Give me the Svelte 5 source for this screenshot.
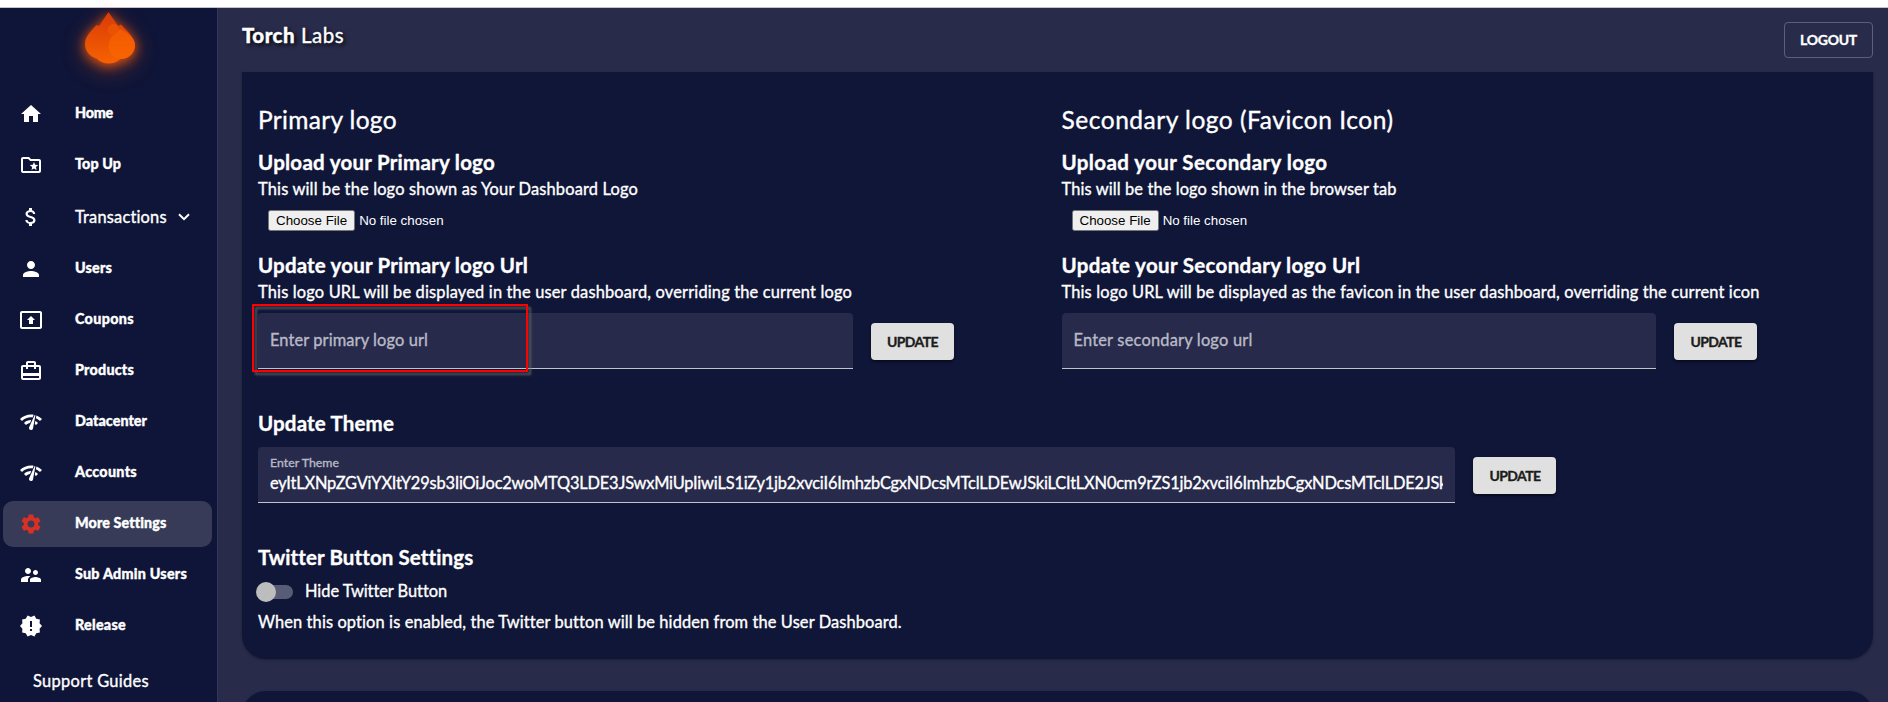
<script>
  const gauge = 'M15.900 5c-.17 0-.32.090-.41.230l-.07.150-5.180 11.650c-.16.290-.26.610-.26.960 0 1.110.9 2.010 2.010 2.010.96 0 1.770-.68 1.960-1.590l.01-.03L16.400 5.500c0-.28-.22-.5-.5-.5zM1 9l2 2c2.880-2.880 6.790-4.080 10.530-3.620l1.190-2.680C9.890 3.840 4.740 5.270 1 9zm20 2l2-2c-1.640-1.640-3.550-2.820-5.590-3.570l-.53 2.820c1.500.62 2.900 1.530 4.120 2.750zm-4 4l2-2c-.8-.8-1.700-1.420-2.660-1.890l-.55 2.920c.42.270.83.590 1.210.970zM5 13l2 2c1.130-1.130 2.560-1.790 4.030-2l1.280-2.880c-2.630-.08-5.300.87-7.310 2.880z';

  const nav = [
    { label: 'Home', width: 38, icon: 'M10 20v-6h4v6h5v-8h3L12 3 2 12h3v8z' },
    { label: 'Top Up', width: 46, icon: 'M20 6h-8l-2-2H4c-1.100 0-1.990.9-1.990 2L2 18c0 1.100.9 2 2 2h16c1.100 0 2-.9 2-2V8c0-1.100-.9-2-2-2zm0 12H4V6h5.170l2 2H20v10zm-6.920-3.040L12.390 17 15 15.470 17.610 17l-.69-2.960 2.300-1.990-3.030-.26L15 9l-1.190 2.790-3.030.26 2.300 1.990z' },
    { label: 'Transactions', width: 92, group: true, icon: 'M11.800 10.900c-2.270-.59-3-1.200-3-2.150 0-1.090 1.010-1.850 2.700-1.850 1.780 0 2.440.85 2.500 2.100h2.210c-.07-1.720-1.120-3.300-3.210-3.810V3h-3v2.160c-1.940.42-3.500 1.680-3.500 3.610 0 2.310 1.910 3.460 4.700 4.130 2.500.6 3 1.480 3 2.410 0 .69-.49 1.790-2.700 1.790-2.060 0-2.870-.92-2.980-2.100h-2.200c.12 2.190 1.760 3.420 3.680 3.830V21h3v-2.150c1.950-.37 3.500-1.500 3.500-3.550 0-2.840-2.430-3.810-4.700-4.400z' },
    { label: 'Users', width: 37, icon: 'M12 12c2.210 0 4-1.790 4-4s-1.790-4-4-4-4 1.790-4 4 1.790 4 4 4zm0 2c-2.670 0-8 1.340-8 4v2h16v-2c0-2.660-5.330-4-8-4z' },
    { label: 'Coupons', width: 59, icon: 'M21 3H3c-1.110 0-2 .89-2 2v14c0 1.110.89 2 2 2h18c1.110 0 2-.89 2-2V5c0-1.110-.89-2-2-2zm0 16.020H3V4.980h18v14.040zM10 12H8l4-4 4 4h-2v4h-4v-4z' },
    { label: 'Products', width: 59, icon: 'M20 6h-3V4c0-1.110-.89-2-2-2H9c-1.110 0-2 .89-2 2v2H4c-1.110 0-2 .89-2 2v11c0 1.110.89 2 2 2h16c1.110 0 2-.89 2-2V8c0-1.110-.89-2-2-2zM9 4h6v2H9V4zm11 15H4v-2h16v2zm0-5H4V8h3v2h2V8h6v2h2V8h3v6z' },
    { label: 'Datacenter', width: 72, icon: gauge },
    { label: 'Accounts', width: 62, icon: gauge },
    { label: 'More Settings', width: 91, active: true, icon: 'M19.140 12.940c.04-.3.060-.61.060-.94 0-.32-.02-.64-.07-.94l2.030-1.580c.18-.14.230-.41.120-.61l-1.920-3.320c-.12-.22-.37-.29-.59-.22l-2.390.96c-.5-.38-1.030-.7-1.620-.94l-.36-2.540c-.04-.24-.24-.41-.48-.41h-3.840c-.24 0-.43.170-.47.410l-.36 2.540c-.59.240-1.130.570-1.620.940l-2.390-.96c-.22-.08-.47 0-.59.220L2.740 8.870c-.12.210-.08.470.120.610l2.030 1.580c-.05.300-.09.630-.09.940s.02.640.070.940l-2.030 1.580c-.18.140-.23.410-.12.610l1.920 3.320c.12.220.37.290.59.220l2.390-.96c.5.380 1.030.7 1.620.940l.36 2.540c.05.240.24.410.48.410h3.840c.24 0 .44-.17.470-.41l.36-2.540c.59-.24 1.130-.56 1.620-.94l2.390.96c.22.080.47 0 .59-.22l1.920-3.320c.12-.22.070-.47-.12-.61l-2.010-1.580zM12 15.600c-1.980 0-3.600-1.620-3.600-3.600s1.620-3.600 3.600-3.600 3.600 1.620 3.600 3.600-1.620 3.600-3.600 3.600z' },
    { label: 'Sub Admin Users', width: 112, icon: 'M16.500 12c1.380 0 2.490-1.120 2.490-2.500S17.880 7 16.500 7C15.120 7 14 8.120 14 9.500s1.120 2.500 2.500 2.500zM9 11c1.660 0 2.990-1.340 2.990-3S10.660 5 9 5C7.340 5 6 6.340 6 8s1.340 3 3 3zm7.500 3c-1.830 0-5.500.92-5.500 2.750V19h11v-2.250c0-1.830-3.670-2.750-5.500-2.750zM9 13c-2.330 0-7 1.170-7 3.500V19h7v-2.250c0-.85.33-2.340 2.370-3.470C10.500 13.100 9.660 13 9 13z' },
    { label: 'Release', width: 51, icon: 'M23 12l-2.440-2.780.34-3.680-3.610-.82-1.890-3.180L12 3 8.600 1.540 6.710 4.720l-3.610.81.34 3.680L1 12l2.440 2.780-.34 3.690 3.610.82 1.890 3.180L12 21l3.400 1.460 1.890-3.180 3.610-.82-.34-3.680L23 12zm-10 5h-2v-2h2v2zm0-4h-2V7h2v6z' },
  ];

  const logos = [
    {
      title: 'Primary logo', titleWidth: 139,
      upload: 'Upload your Primary logo', uploadWidth: 237,
      hint: 'This will be the logo shown as Your Dashboard Logo', hintWidth: 380,
      update: 'Update your Primary logo Url', updateWidth: 270,
      urlHint: 'This logo URL will be displayed in the user dashboard, overriding the current logo', urlHintWidth: 594,
      placeholder: 'Enter primary logo url', placeholderWidth: 158,
      marked: true,
    },
    {
      title: 'Secondary logo (Favicon Icon)', titleWidth: 332,
      upload: 'Upload your Secondary logo', uploadWidth: 266,
      hint: 'This will be the logo shown in the browser tab', hintWidth: 335,
      update: 'Update your Secondary logo Url', updateWidth: 299,
      urlHint: 'This logo URL will be displayed as the favicon in the user dashboard, overriding the current icon', urlHintWidth: 698,
      placeholder: 'Enter secondary logo url', placeholderWidth: 179,
    },
  ];

  const theme = 'eyItLXNpZGViYXItY29sb3IiOiJoc2woMTQ3LDE3JSwxMiUpIiwiLS1iZy1jb2xvciI6ImhzbCgxNDcsMTclLDEwJSkiLCItLXN0cm9rZS1jb2xvciI6ImhzbCgxNDcsMTclLDE2JSki';

  // Tracks a line of text so that it spans the given width.
  function fit(node, width) {
    node.style.letterSpacing = '0px';
    const natural = node.getBoundingClientRect().width;
    node.style.letterSpacing = `${(width - natural) / node.textContent.length}px`;
  }
</script>

<div class="page">
  <div class="strip"></div>
  <div class="shell">
    <aside>
      <div class="brand">
        <svg width="50" height="52" viewBox="0 0 50 52">
          <defs>
            <linearGradient id="flame" x1="0" y1="0" x2="0" y2="1">
              <stop offset="0" stop-color="#d93a08" />
              <stop offset="1" stop-color="#f66200" />
            </linearGradient>
          </defs>
          <path fill="url(#flame)" d="M23.500 0 33 14 36 12.500C43 20 50 26 50 33c0 8-6 14-14.500 14C32 50 28 51.500 23.500 51.500S15 50 11.500 46.500C5 44.500 0 39 0 32 0 25 5 20 11.500 13l2.500 1z" />
          <circle cx="28.500" cy="18" r="6" fill="#ea5204" />
          <path fill="#fb6800" d="M35 17C43 21 50 26 50 33c0 8-6 14-14.500 14-7 0-12-6-12-13 0-5 2-8 5-11 3-1 5-3 6.500-6z" opacity=".6" />
        </svg>
      </div>
      <nav>
        {#each nav as item}
          <a class:active={item.active} class:group={item.group}>
            <svg class="icon" viewBox="0 0 24 24"><path d={item.icon} /></svg>
            <span class="label" use:fit={item.width}>{item.label}</span>
            {#if item.group}
              <svg class="chevron" viewBox="0 0 12 8"><path d="M1 1.200 6 6.200 11 1.200" /></svg>
            {/if}
          </a>
        {/each}
      </nav>
      <div class="support"><span use:fit={116}>Support Guides</span></div>
    </aside>

    <main>
      <header>
        <div class="name"><b use:fit={53}>Torch</b><span use:fit={43}>Labs</span></div>
        <button class="logout"><span use:fit={57}>LOGOUT</span></button>
      </header>

      <section class="card first">
        <div class="columns">
          {#each logos as logo}
            <div class="column">
              <h2><span use:fit={logo.titleWidth}>{logo.title}</span></h2>
              <h3><span use:fit={logo.uploadWidth}>{logo.upload}</span></h3>
              <p><span use:fit={logo.hintWidth}>{logo.hint}</span></p>
              <input type="file" />
              <h3><span use:fit={logo.updateWidth}>{logo.update}</span></h3>
              <p><span use:fit={logo.urlHintWidth}>{logo.urlHint}</span></p>
              <div class="row">
                <div class="field">
                  <span class="placeholder" use:fit={logo.placeholderWidth}>{logo.placeholder}</span>
                  {#if logo.marked}<i class="mark"></i>{/if}
                </div>
                <button class="update"><span use:fit={51}>UPDATE</span></button>
              </div>
            </div>
          {/each}
        </div>

        <h3 class="theme-title"><span use:fit={136}>Update Theme</span></h3>
        <div class="row">
          <div class="field filled">
            <small><span use:fit={69}>Enter Theme</span></small>
            <div class="value"><span use:fit={1181}>{theme}</span></div>
          </div>
          <button class="update"><span use:fit={51}>UPDATE</span></button>
        </div>

        <h3 class="twitter-title"><span use:fit={213}>Twitter Button Settings</span></h3>
        <div class="toggle">
          <span class="switch"></span>
          <span class="toggle-label" use:fit={141}>Hide Twitter Button</span>
        </div>
        <p class="note"><span use:fit={643}>When this option is enabled, the Twitter button will be hidden from the User Dashboard.</span></p>
      </section>

      <section class="card next"></section>
    </main>
  </div>
</div>

<style>
  :global(body) { overflow: hidden; }
  .page {
    display: flex;
    flex-direction: column;
    height: 702px;
    overflow: hidden;
    background: #282b4a;
    color: #fff;
    font-family: Lato, "Open Sans", sans-serif;
    font-size: 16.400px;
    -webkit-text-stroke: 0.35px currentColor;
  }
  * { box-sizing: border-box; }
  span, b { white-space: nowrap; }
  .strip { flex: none; height: 8px; background: #fff; border-bottom: 1px solid #c4c4c8; }
  .shell { display: flex; flex: 1; min-height: 0; }

  aside {
    flex: none;
    width: 218px;
    background: #0f1538;
    border-right: 1px solid #33365a;
  }
  .brand { display: flex; height: 83px; padding: 4px 0 0 84.500px; }
  .brand svg { filter: drop-shadow(0 2px 6px rgb(255 90 10 / 0.85)) drop-shadow(0 4px 10px rgb(255 90 10 / 0.35)); }
  nav { display: flex; flex-direction: column; gap: 5px; padding: 0 5px 0 3px; }
  nav a {
    display: flex;
    align-items: center;
    height: 46px;
    padding-left: 16px;
    border-radius: 10px;
    font-size: 14.300px;
    font-weight: 900;
  }
  nav a.group { height: 48px; font-size: 16.400px; font-weight: 400; }
  nav a.active { background: #373b58; }
  .icon { flex: none; width: 24px; height: 24px; margin-right: 32px; fill: #fff; }
  .active .icon { fill: #d93025; }
  .label { padding-bottom: 3px; }
  .group .label { padding-bottom: 2px; }
  .chevron { width: 12px; height: 8px; margin-left: 11px; fill: none; stroke: #fff; stroke-width: 2; }
  .support { padding: 20px 0 0 33px; line-height: 24px; }

  main { flex: 1; padding: 0 15px 0 24px; }
  header { display: flex; justify-content: space-between; height: 64px; }
  .name {
    display: flex;
    gap: 6px;
    padding-top: 14px;
    font-size: 20.500px;
    line-height: 26px;
    text-shadow: 2px 2px 4px #000;
  }
  .name b { font-weight: 900; }
  button { font-family: inherit; font-size: 14px; font-weight: 700; cursor: pointer; }
  .logout {
    width: 89px;
    height: 36px;
    margin-top: 14px;
    padding: 0 0 1px;
    border: 1px solid #5d607a;
    border-radius: 4px;
    background: none;
    color: #fff;
  }

  .card {
    background: #101638;
    border-radius: 24px;
    box-shadow: 0 1px 3px rgb(0 0 0 / 0.3);
  }
  .first { height: 587px; padding: 28px 0 0 16px; border-radius: 0 0 24px 24px; }
  .next { height: 100px; margin-top: 32px; }
  .columns { display: grid; grid-template-columns: 803.500px 1fr; }
  h2, h3, p { margin: 0; }
  h2 { font-size: 24.500px; font-weight: 400; line-height: 40px; }
  h3 { font-size: 20.500px; font-weight: 700; line-height: 32px; }
  h3 { margin-top: 7px; }
  h2 + h3 { margin-top: 6px; }
  p { margin-top: -1px; line-height: 24px; }
  input[type="file"] {
    display: block;
    width: 300px;
    height: 21px;
    margin: 9px 0 18px 10px;
    color: #fff;
    font: 13.333px "Liberation Sans", sans-serif;
    -webkit-text-stroke: 0;
  }
  .row { display: flex; align-items: center; gap: 18px; }
  .column .row { margin-top: 9px; }
  .field {
    position: relative;
    display: flex;
    align-items: center;
    width: 594.500px;
    height: 56px;
    padding: 0 12px;
    border-bottom: 1px solid #c0c2cc;
    border-radius: 4px 4px 0 0;
    background: #272a4b;
  }
  .placeholder { padding-bottom: 2px; color: #b9bac6; }
  .mark {
    position: absolute;
    left: -6px;
    top: -9px;
    width: 276px;
    height: 68px;
    border: 2px solid #f00;
    filter: drop-shadow(3px 3px 1px rgb(110 110 100 / 0.75));
  }
  .update {
    width: 83px;
    height: 37px;
    margin-top: 1px;
    padding: 0 0 1px 1px;
    border: 0;
    border-radius: 4px;
    background: #e0e0e0;
    color: #1c1c1c;
    box-shadow: 0 2px 3px rgb(0 0 0 / 0.5);
  }
  .theme-title { margin: 38px 0 8px; }
  .filled { display: block; width: 1197px; padding-top: 7px; }
  small { display: block; font-size: 12.300px; line-height: 18px; color: #b9bac6; }
  .value { overflow: hidden; margin-top: -1px; line-height: 24px; }
  .twitter-title { margin-top: 38px; }
  .toggle { display: flex; align-items: center; height: 37px; }
  .switch {
    position: relative;
    width: 34px;
    height: 14px;
    margin: 0 12px 0 1px;
    border-radius: 7px;
    background: #585c75;
  }
  .switch::before {
    content: "";
    position: absolute;
    left: -3px;
    top: -3px;
    width: 20px;
    height: 20px;
    border-radius: 50%;
    background: #bdbdbd;
  }
  .toggle-label { padding-bottom: 2px; }
  .note { margin-top: 0; }
</style>
